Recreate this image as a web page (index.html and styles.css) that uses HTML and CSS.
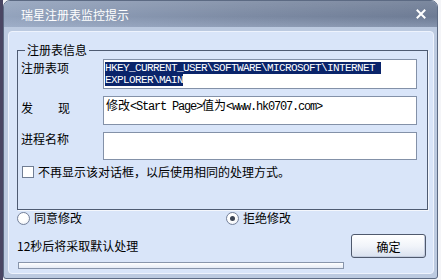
FILE: index.html
```html
<!DOCTYPE html>
<html lang="zh-CN">
<head>
  <meta charset="UTF-8">
  <title>瑞星注册表监控提示</title>
  <link rel="stylesheet" href="styles.css">
</head>
<body>

  <div class="window">
    <div class="titlebar">
      <span class="title">瑞星注册表监控提示</span>
      <svg class="close" width="10" height="10" viewBox="0 0 10 10">
        <path d="M1.5 1.5 L8.5 8.5 M8.5 1.5 L1.5 8.5" stroke="#fff" stroke-width="2" stroke-linecap="square"/>
      </svg>
    </div>

    <div class="frame">
      <div class="panel">
        <fieldset class="group">
          <legend>注册表信息</legend>
          <div class="rows">
            <div class="label">注册表项</div>
            <div class="field field-key">
              <div><span class="sel">HKEY_CURRENT_USER\SOFTWARE\MICROSOFT\INTERNET </span></div>
              <div><span class="sel">EXPLORER\MAIN</span></div>
            </div>

            <div class="label label-spaced"><span>发</span><span>现</span></div>
            <div class="field field-found">修改<span class="en">&lt;Start Page&gt;</span>值为<span class="en">&lt;www.hk0707.com&gt;</span></div>

            <div class="label label-low">进程名称</div>
            <div class="field"></div>
          </div>

          <div class="check">
            <span class="box"></span>
            <span>不再显示该对话框，以后使用相同的处理方式。</span>
          </div>
        </fieldset>

        <div class="choices">
          <div class="choice"><span class="radio"></span>同意修改</div>
          <div class="choice"><span class="radio on"></span>拒绝修改</div>
        </div>

        <div class="footer">
          <span class="countdown">12秒后将采取默认处理</span>
          <button class="ok">确定</button>
        </div>

        <div class="progress"></div>
      </div>
    </div>
  </div>

</body>
</html>
```

FILE: styles.css
```css
body {
  margin: 0;
  padding-left: 3px;
  background: linear-gradient(to right, #4a4663 0, #4a4663 3px, #f4f5f8 3px);
  font-family: "Noto Sans CJK SC", sans-serif;
  font-size: 12px;
  color: #000;
}

.window {
  width: 433px;
  border: 1px solid #5c6a83;
  border-radius: 7px 7px 3px 3px;
  background: #bccae0;
  overflow: hidden;
}

.titlebar {
  height: 26px;
  display: flex;
  align-items: center;
  justify-content: space-between;
  padding: 0 11px 0 17px;
  background:
    linear-gradient(to bottom, rgba(255,255,255,0.1) 0, rgba(255,255,255,0) 60%, rgba(180,195,220,0.35) 100%),
    linear-gradient(to right, #93a3bd, #7d8ba4 55%, #6d7b94);
  color: #fff;
}

.title {
  line-height: 14px;
  padding-top: 1px;
}

.close {
  display: block;
}

.frame {
  padding: 4px 3px 4px 4px;
}

.panel {
  background: #d9e5f9;
  border: 1px solid #eef3fd;
  border-radius: 4px;
  padding: 0 5px 4px 8px;
}

.group {
  margin: 11px 0 0 0;
  padding: 2px 10px 31px 3px;
  border: 1px solid #4e5b72;
  box-shadow: 1px 1px 0 #f4f7fd;
  min-width: 0;
}

.group legend {
  padding: 0 2px;
  margin-left: 4px;
  line-height: 14px;
}

.rows {
  display: grid;
  grid-template-columns: 82px 1fr;
  row-gap: 7px;
}

.label {
  line-height: 14px;
  padding-top: 2px;
}

.label-spaced {
  display: flex;
  width: 49px;
  justify-content: space-between;
  padding-top: 5px;
}

.label-low {
  padding-top: 0;
}

.field {
  height: 26px;
  background: #fff;
  border: 1px solid #8391a8;
  padding: 0 2px;
}

.field-key {
  padding: 2px 1px 0;
  font-family: "Liberation Mono", monospace;
  font-size: 11px;
  letter-spacing: -0.6px;
}

.sel {
  display: inline-block;
  line-height: 12px;
  height: 12px;
  background: #0a246a;
  color: #fff;
  white-space: pre;
}

.field-found {
  line-height: 14px;
  padding-top: 1px;
}

.en {
  font-family: "Liberation Mono", monospace;
  font-size: 12px;
  letter-spacing: -1.2px;
}

.check {
  display: flex;
  align-items: center;
  gap: 4px;
  margin: 5px 0 0 1px;
  height: 13px;
  line-height: 13px;
}

.box {
  width: 10px;
  height: 10px;
  background: #fff;
  border: 1px solid #707d93;
}

.choices {
  display: grid;
  grid-template-columns: 209px 1fr;
  margin-top: 1px;
  line-height: 14px;
}

.choice {
  display: flex;
  align-items: center;
  gap: 4px;
}

.radio {
  width: 11px;
  height: 11px;
  border: 1px solid #75819a;
  border-radius: 50%;
  background: radial-gradient(circle at 40% 35%, #fff 0, #fff 45%, #e3e8f1 100%);
  position: relative;
}

.radio.on::after {
  content: "";
  position: absolute;
  left: 3px;
  top: 3px;
  width: 5px;
  height: 5px;
  border-radius: 50%;
  background: #3d4555;
}

.footer {
  display: flex;
  align-items: center;
  justify-content: space-between;
  margin: 9px 2px 0 0;
}

.countdown {
  line-height: 14px;
}

.ok {
  width: 75px;
  height: 24px;
  border: 1px solid #4f596d;
  border-radius: 3px;
  background: linear-gradient(to bottom, #ffffff, #f1f4fa 50%, #d9e1ef);
  box-shadow: inset -1px -1px 0 #c4cde0;
  font-family: "Noto Sans CJK SC", sans-serif;
  font-size: 12px;
  color: #000;
  padding: 0;
}

.progress {
  width: 324px;
  height: 5px;
  margin: 4px 0 0 1px;
  border: 1px solid #8895ab;
  background: linear-gradient(to bottom, #ffffff, #e4eaf5);
}
```
